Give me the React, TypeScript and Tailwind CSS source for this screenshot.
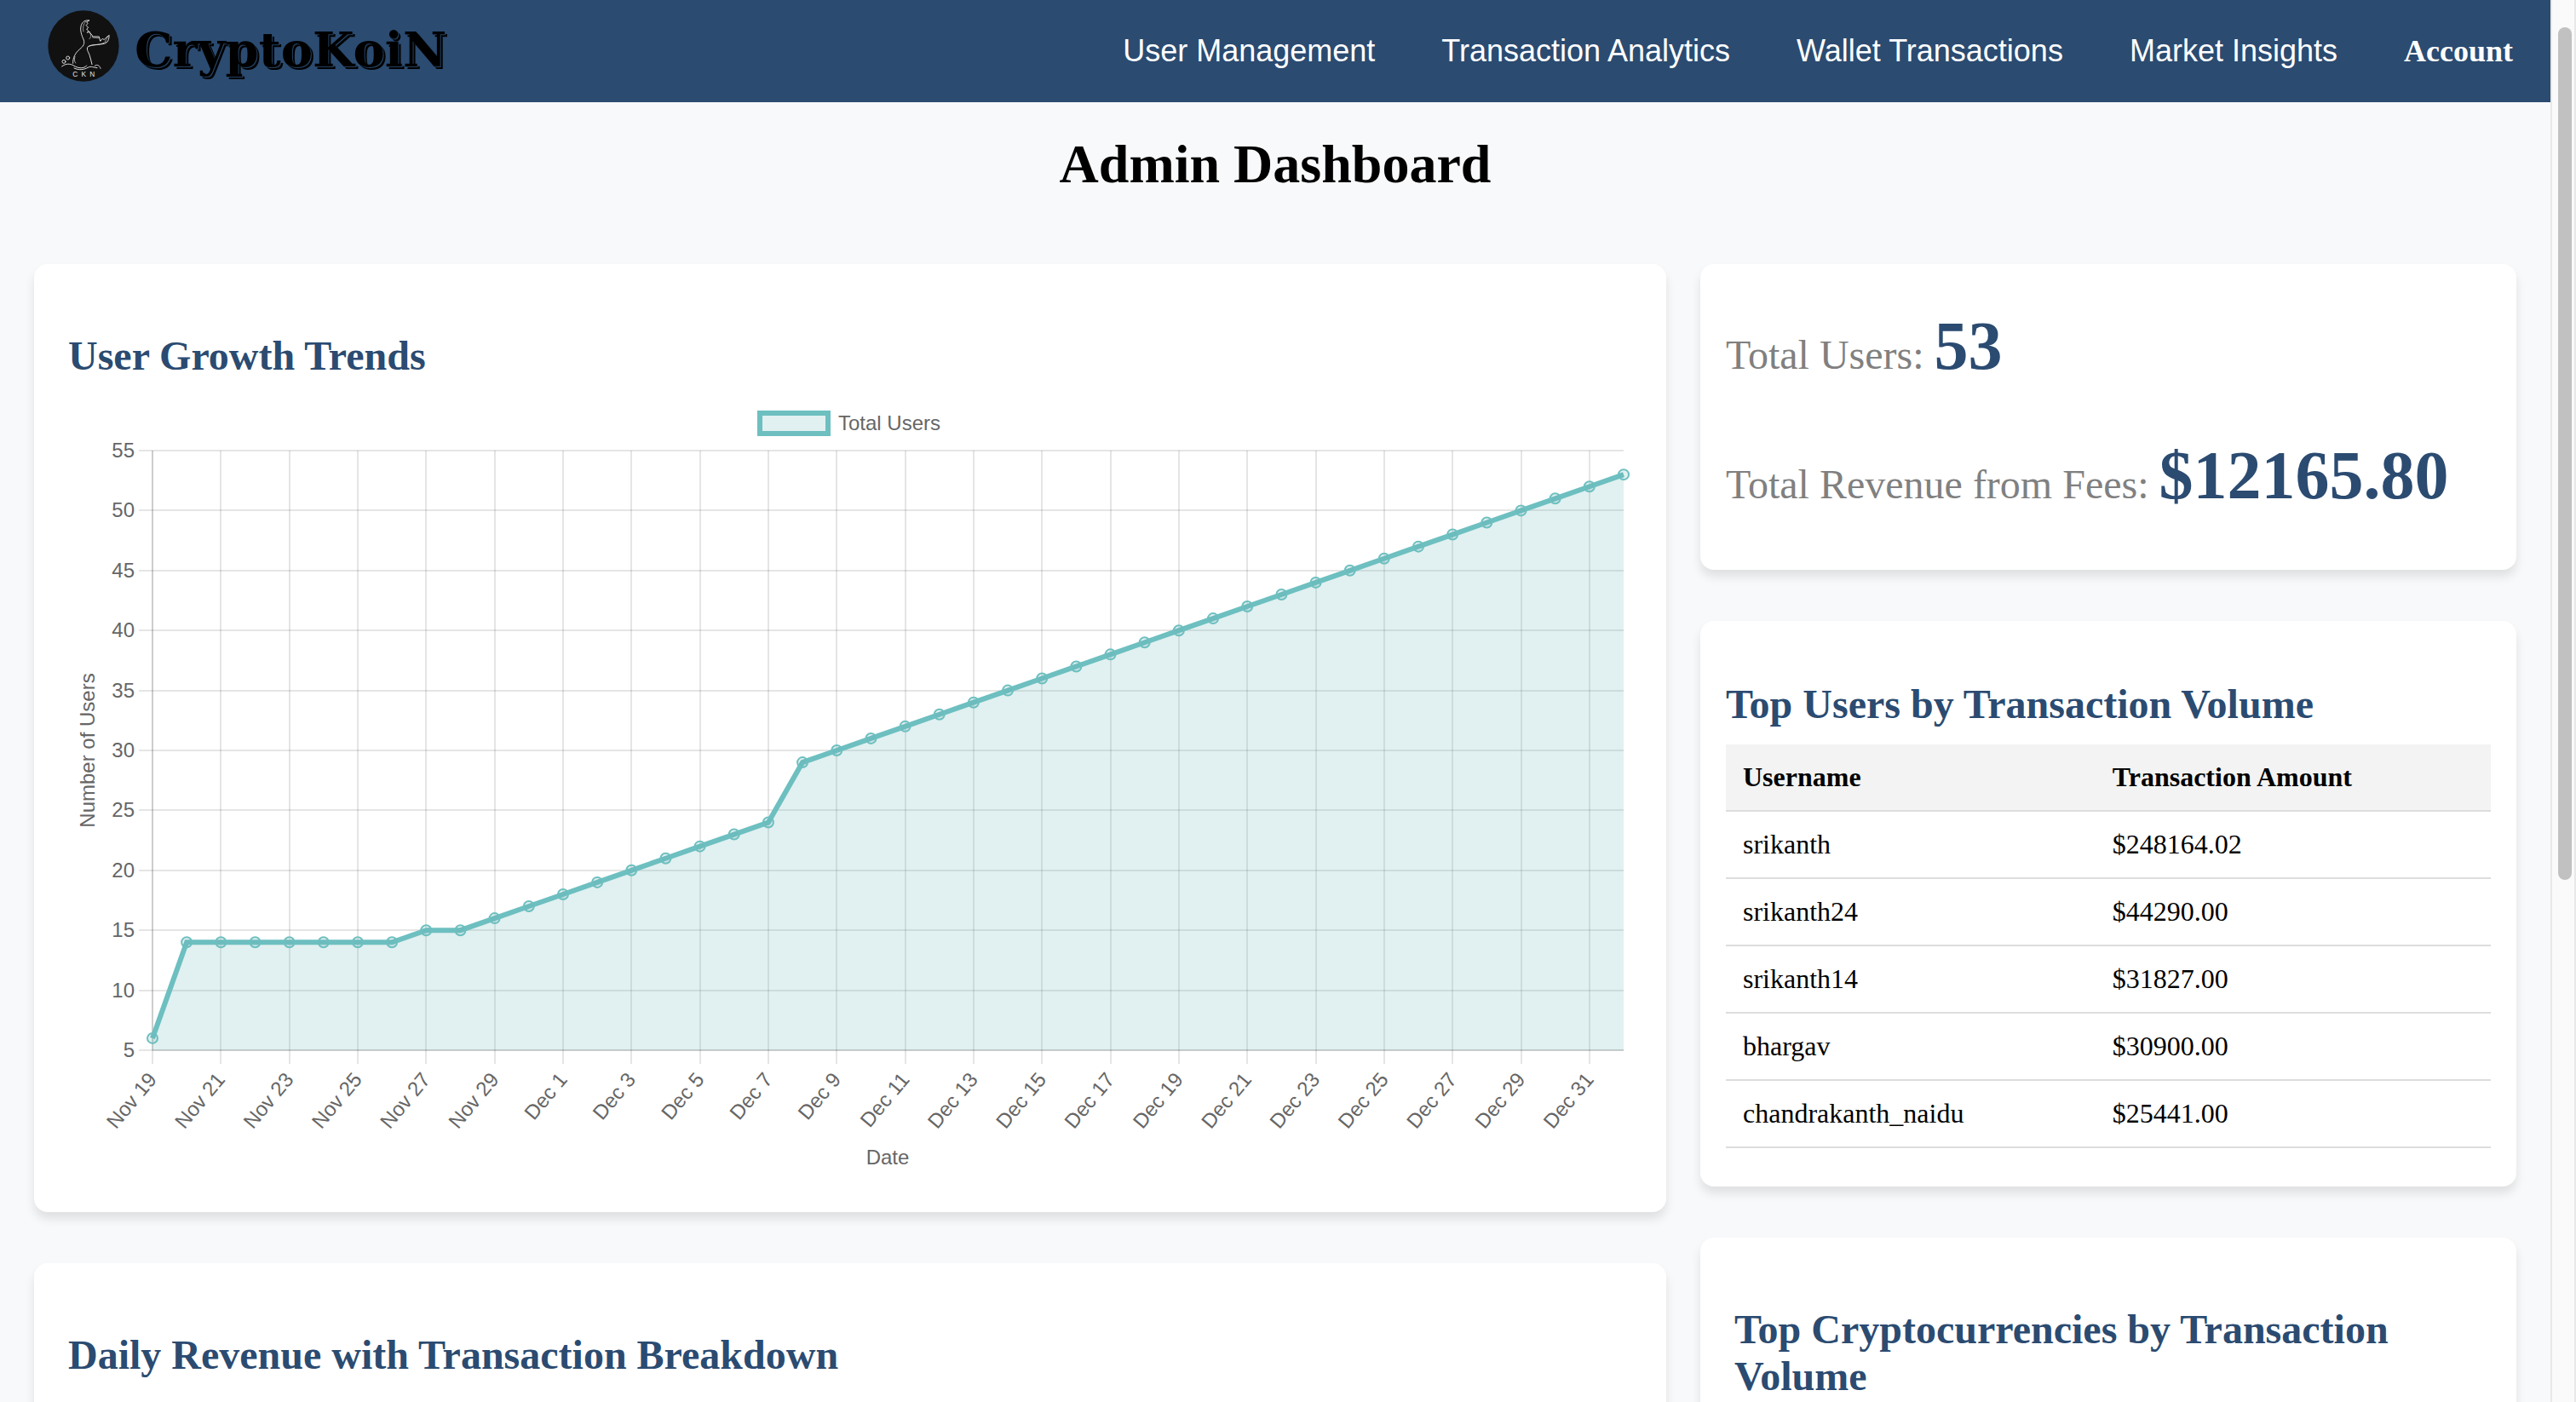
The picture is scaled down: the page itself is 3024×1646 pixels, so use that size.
import React from "react";

const SANS = "font-['Liberation_Sans',Arial,sans-serif]";
const CARD = "rounded-2xl bg-white shadow-[0_8px_12px_rgba(0,0,0,0.1)]";
const HEADING = "text-[48px] leading-[55px] font-bold text-[#2b4b71]";

const navLinks = [
  "User Management",
  "Transaction Analytics",
  "Wallet Transactions",
  "Market Insights",
];

const topUsers = [
  { name: "srikanth", amount: "$248164.02" },
  { name: "srikanth24", amount: "$44290.00" },
  { name: "srikanth14", amount: "$31827.00" },
  { name: "bhargav", amount: "$30900.00" },
  { name: "chandrakanth_naidu", amount: "$25441.00" },
];

// Cumulative users per day, Nov 19 to Jan 1.
const userCounts = [
  6, 14, 14, 14, 14, 14, 14, 14, 15, 15, 16, 17, 18, 19, 20, 21, 22, 23, 24,
  ...Array.from({ length: 25 }, (_, i) => 29 + i),
];

const dayLabel = (i: number) => (i < 12 ? `Nov ${19 + i}` : `Dec ${i - 11}`);

const PLOT = { left: 99, right: 1826, top: 64, bottom: 768 };
const xAt = (i: number) =>
  PLOT.left + ((PLOT.right - PLOT.left) * i) / (userCounts.length - 1);
const yAt = (v: number) =>
  PLOT.bottom - ((PLOT.bottom - PLOT.top) * (v - 5)) / 50;

function Logo() {
  return (
    <svg viewBox="48 37 250 252" className="size-[84px] shrink-0" role="img" aria-label="CKN">
      <circle cx="173" cy="163" r="125" fill="#111111" />
      <g fill="none" stroke="#dcdcdc" strokeWidth="3" strokeLinecap="round" strokeLinejoin="round">
        <path d="M193 73 C180 71 170 76 165 90 C160 108 166 124 174 142 C178 156 172 164 160 174 C144 188 135 204 136 224" />
        <path d="M145 223 C139 216 141 206 143 200" strokeWidth="2" />
        <path d="M193 73 L184 78 L188 84 L182 90 L190 98 L184 103 L190 110 L186 116 L194 112 C196 120 204 122 205 130 L228 130 L232 146 L240 137 L246 141 L254 132 L263 126" />
        <path d="M181 77 C172 86 170 98 173 112" strokeWidth="2" />
        <path d="M192 114 C200 122 202 130 194 138 M205 133 L226 135 M250 146 L258 132" strokeWidth="2" />
        <path d="M263 126 C264 140 258 152 246 155 C226 160 202 156 189 165 C182 174 190 184 194 194 C198 206 200 216 203 228" />
        <path d="M194 163 C210 158 236 160 252 148" strokeWidth="2" />
        <path d="M97 235 C110 224 126 224 140 233 C154 242 176 244 184 232" />
        <path d="M140 241 C158 250 176 246 188 239 C200 232 210 240 221 240 M213 233 C222 226 230 232 233 242" />
        <circle cx="118" cy="205" r="6" />
        <circle cx="104" cy="218" r="6" />
      </g>
      <g fill="#e4e4e4" fontSize="25" fontFamily="'Liberation Sans', Arial, sans-serif" textAnchor="middle">
        <text x="144" y="271">C</text>
        <text x="174" y="271">K</text>
        <text x="204" y="271">N</text>
      </g>
    </svg>
  );
}

function UserGrowthChart() {
  const points = userCounts.map((v, i) => `${xAt(i)},${yAt(v)}`);
  const yTicks = Array.from({ length: 11 }, (_, i) => 5 + i * 5);
  const xTicks = Array.from({ length: 22 }, (_, i) => i * 2);
  return (
    <svg
      viewBox="0 0 1836 918"
      className="block w-full"
      role="img"
      aria-label="Total users by date"
      fill="#666666"
      fontSize="24"
      fontFamily="'Liberation Sans', Arial, sans-serif"
    >
      <rect x="812" y="20" width="80" height="24" fill="#e1f0f0" stroke="#6dbfc0" strokeWidth="6" />
      <text x="904" y="40">Total Users</text>

      <g stroke="#000000" strokeOpacity="0.1" strokeWidth="2">
        {yTicks.map((v) => (
          <line key={v} x1={PLOT.left - 16} x2={PLOT.right} y1={Math.round(yAt(v))} y2={Math.round(yAt(v))} />
        ))}
        {xTicks.map((i) => (
          <line key={i} y1={PLOT.top} y2={PLOT.bottom + 16} x1={Math.round(xAt(i))} x2={Math.round(xAt(i))} />
        ))}
        <line x1={PLOT.left} x2={PLOT.left} y1={PLOT.top} y2={PLOT.bottom} />
        <line x1={PLOT.left} x2={PLOT.right} y1={PLOT.bottom} y2={PLOT.bottom} />
      </g>

      <polygon
        points={`${PLOT.left},${PLOT.bottom} ${points.join(" ")} ${PLOT.right},${PLOT.bottom}`}
        fill="#68b4b4"
        fillOpacity="0.2"
      />
      <polyline points={points.join(" ")} fill="none" stroke="#6dbfc0" strokeWidth="6" strokeLinejoin="miter" />
      {userCounts.map((v, i) => (
        <circle key={i} cx={xAt(i)} cy={yAt(v)} r="6" fill="#68b4b4" fillOpacity="0.2" stroke="#6dbfc0" strokeWidth="2" />
      ))}

      {yTicks.map((v) => (
        <text key={v} x="78" y={Math.round(yAt(v)) + 8} textAnchor="end">
          {v}
        </text>
      ))}
      {xTicks.map((i) => (
        <text key={i} transform={`translate(${xAt(i)} 798) rotate(-50)`} y="8" textAnchor="end">
          {dayLabel(i)}
        </text>
      ))}
      <text x="962" y="902" textAnchor="middle">Date</text>
      <text transform="translate(31 416) rotate(-90)" textAnchor="middle">Number of Users</text>
    </svg>
  );
}

function Stat({ label, value }: { label: string; value: string }) {
  return (
    <p className="text-[48px] leading-[55px] text-[#808080]">
      {label} <span className="text-[80px] leading-[92px] font-bold text-[#2b4b71]">{value}</span>
    </p>
  );
}

export default function App() {
  return (
    <div className="flex h-screen overflow-hidden bg-[#f8f9fb] font-['Liberation_Serif','Times_New_Roman',serif] text-black">
      <div className="min-w-0 flex-1">
        <header className="flex h-[120px] items-center justify-between bg-[#2b4b71] pr-11 pl-14">
          <a href="#" className="flex items-center gap-[18px] pb-3">
            <Logo />
            <span className="pt-2 font-['DejaVu_Serif',serif] text-[56px] leading-[64px] font-bold [text-shadow:1px_1px_#24405f,3px_3px_#000]">
              CryptoKoiN
            </span>
          </a>
          <nav className="flex items-baseline gap-[78px] text-[36px] leading-[42px] text-white">
            {navLinks.map((label) => (
              <a key={label} href="#" className={SANS}>
                {label}
              </a>
            ))}
            <a href="#" className="font-bold">
              Account
            </a>
          </nav>
        </header>

        <main className="px-10">
          <h1 className="pt-9 pb-20 text-center text-[64px] leading-[74px] font-bold">Admin Dashboard</h1>
          <div className="grid grid-cols-[2fr_1fr] items-start gap-10">
            <div className="flex min-w-0 flex-col gap-[60px]">
              <section className={`${CARD} p-10`}>
                <h2 className={`${HEADING} pt-10 pb-5`}>User Growth Trends</h2>
                <UserGrowthChart />
              </section>
              <section className={`${CARD} p-10`}>
                <h2 className={`${HEADING} pt-10 pb-20`}>Daily Revenue with Transaction Breakdown</h2>
              </section>
            </div>

            <div className="flex min-w-0 flex-col gap-[60px]">
              <section className={`${CARD} flex flex-col gap-[60px] px-[30px] pt-[50px] pb-[65px]`}>
                <Stat label="Total Users:" value="53" />
                <Stat label="Total Revenue from Fees:" value="$12165.80" />
              </section>

              <section className={`${CARD} px-[30px] pt-[70px] pb-[45px]`}>
                <h2 className={`${HEADING} pb-5`}>Top Users by Transaction Volume</h2>
                <table className="w-full border-separate border-spacing-0 text-left text-[32px] leading-[37px]">
                  <thead>
                    <tr className="bg-[#f3f3f3]">
                      <th className="w-[48.3%] border-b-2 border-[#dddddd] p-5">Username</th>
                      <th className="border-b-2 border-[#dddddd] p-5">Transaction Amount</th>
                    </tr>
                  </thead>
                  <tbody>
                    {topUsers.map((user) => (
                      <tr key={user.name}>
                        <td className="border-b-2 border-[#dddddd] p-5">{user.name}</td>
                        <td className="border-b-2 border-[#dddddd] p-5">{user.amount}</td>
                      </tr>
                    ))}
                  </tbody>
                </table>
              </section>

              <section className={`${CARD} p-10`}>
                <h2 className={`${HEADING} pt-10 pb-20`}>Top Cryptocurrencies by Transaction Volume</h2>
              </section>
            </div>
          </div>
        </main>
      </div>

      <div aria-hidden="true" className="w-[30px] shrink-0 border-x-2 border-[#e8e8e8] bg-[#fafafa] pt-8 pr-[3px] pl-[7px]">
        <div className="h-[62%] rounded-full bg-[#c1c1c1]" />
      </div>
    </div>
  );
}
